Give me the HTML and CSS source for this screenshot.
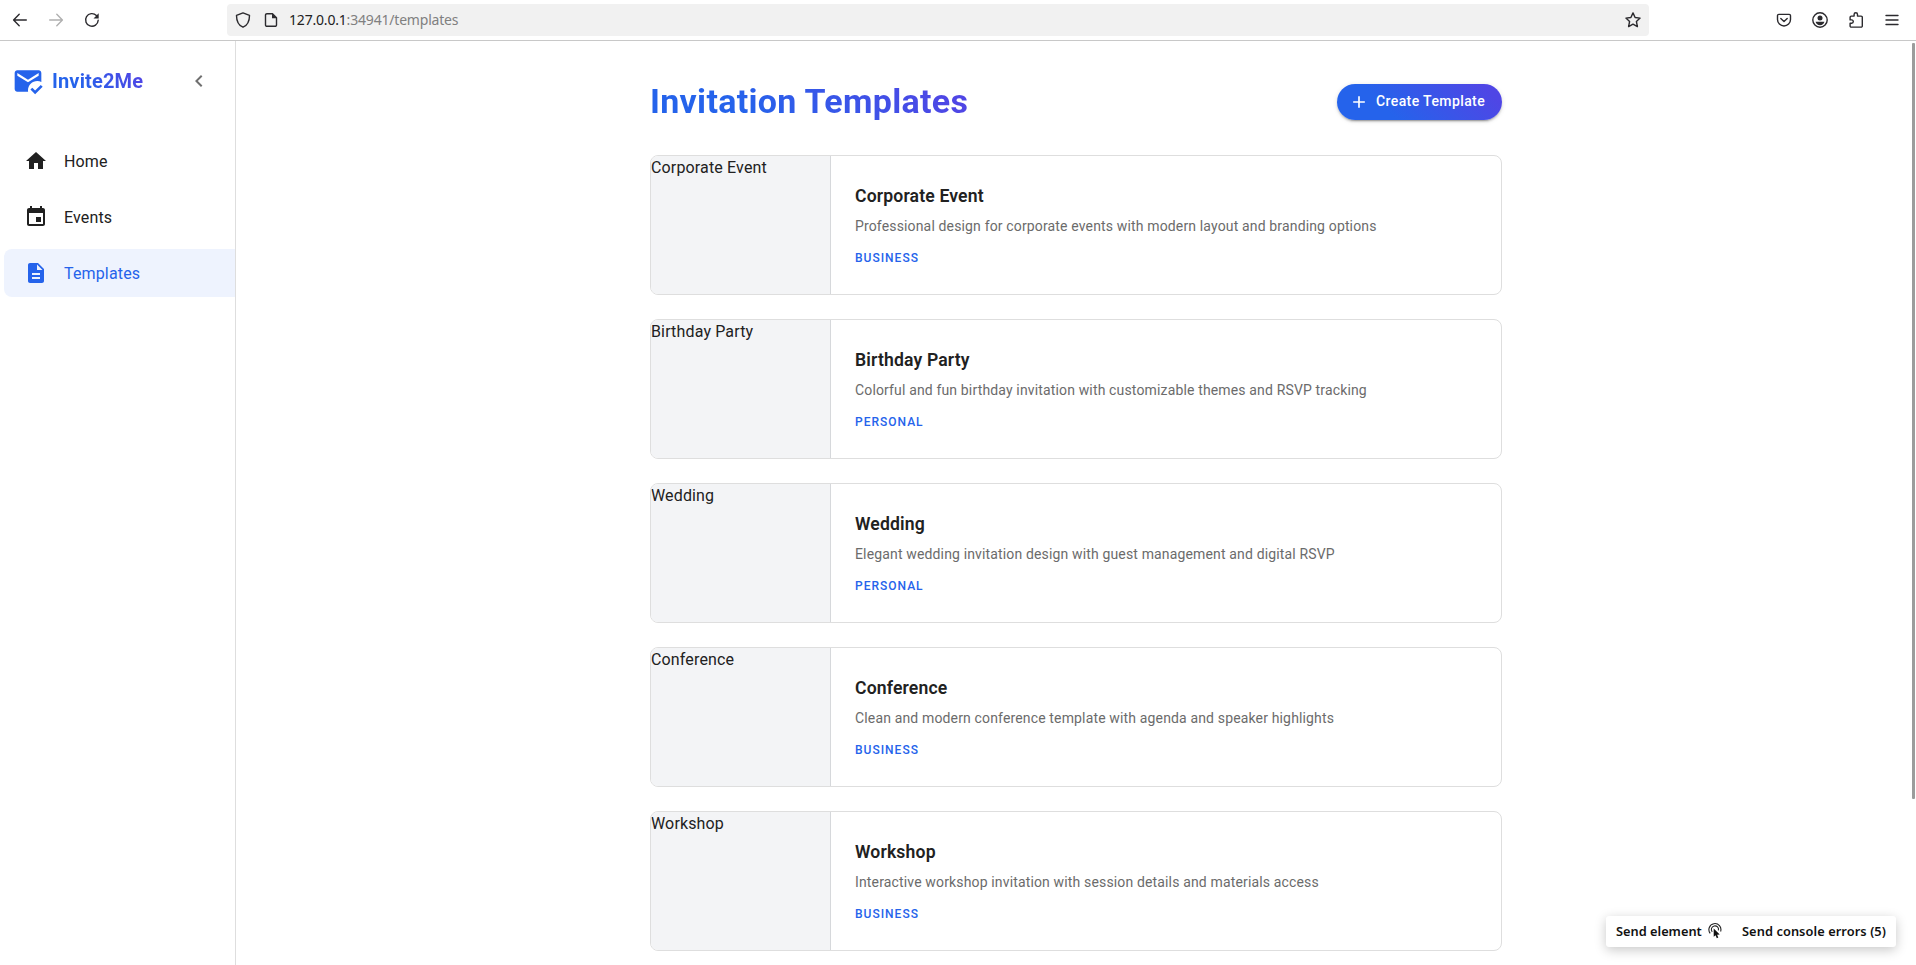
FILE: index.html
```html
<!DOCTYPE html>
<html lang="en">
<head>
<meta charset="utf-8">
<title>Invite2Me</title>
<link rel="stylesheet" href="styles.css">
</head>
<body>
<header class="browser">
  <div class="nav-buttons">
    <svg width="16" height="16" viewBox="0 0 16 16" class="line"><path d="M14.3 8H1.8M7.2 2.3 1.6 8l5.6 5.7"/></svg>
    <svg width="16" height="16" viewBox="0 0 16 16" class="line faded"><path d="M1.7 8h12.5M8.8 2.3 14.4 8l-5.6 5.7"/></svg>
    <svg width="16" height="16" viewBox="0 0 16 16" class="line"><path d="M14.2 8.3A6.3 6.3 0 1 1 12.4 3.500"/><path d="M14.700 1.300v5.200H9.500z" fill="currentColor" stroke="none"/></svg>
  </div>
  <div class="address">
    <svg width="16" height="16" viewBox="0 0 16 16" class="line"><path d="M8 .9 14.500 3.400C14.500 9 12.500 13.200 8 15.200 3.500 13.200 1.500 9 1.500 3.400z"/></svg>
    <svg width="16" height="16" viewBox="0 0 16 16" class="line page"><path d="M3.900 1.700h5.600l4 4v7.200a1.400 1.400 0 0 1-1.400 1.400H3.900a1.400 1.400 0 0 1-1.400-1.400V3.100a1.400 1.400 0 0 1 1.400-1.400z"/><path d="M9 1.200v5h5z" fill="currentColor" stroke="none"/></svg>
    <span class="url"><b>127.0.0.1</b>:34941/templates</span>
    <svg width="16" height="16" viewBox="0 0 16 16" class="line star"><path d="m8 .9 2.100 4.600 5 .6-3.700 3.400 1 5.100L8 12.100l-4.400 2.500 1-5.100L.9 6.100l5-.6z"/></svg>
  </div>
  <div class="tools">
    <svg width="16" height="16" viewBox="0 0 16 16" class="line"><path d="M2.800 2.400h10.400a1.300 1.300 0 0 1 1.300 1.300v3.800a6.500 6.500 0 0 1-13 0V3.700a1.300 1.300 0 0 1 1.300-1.300z"/><path d="M4.800 6.500 8 9.500l3.200-3"/></svg>
    <svg width="16" height="16" viewBox="0 0 16 16" class="line"><circle cx="8" cy="8" r="7.200"/><circle cx="8" cy="6" r="2.500" fill="currentColor" stroke="none"/><path d="M3.600 9.800h8.800c-.5 2.200-2.200 3.500-4.400 3.500s-3.900-1.300-4.400-3.500z" fill="currentColor" stroke="none"/></svg>
    <svg width="16" height="16" viewBox="0 0 16 16" class="line"><path d="M2.100 5.300a1.200 1.200 0 0 1 1.200-1.200h2.800V2.400a1.700 1.700 0 0 1 3.400 0v1.700h3.600a1.200 1.200 0 0 1 1.200 1.200v8.600a1.200 1.200 0 0 1-1.200 1.200H3.300a1.200 1.200 0 0 1-1.200-1.200v-2.600h1.500a1.700 1.700 0 0 0 0-3.400H2.100z"/></svg>
    <svg width="16" height="16" viewBox="0 0 16 16" class="line"><path d="M2 3.500h12M2 8h12M2 12.500h12"/></svg>
  </div>
</header>
<div class="app">
  <aside class="sidebar">
    <div class="brand">
      <svg class="brand-icon" width="32" height="32" viewBox="0 0 24 24"><path d="M20 4H4c-1.100 0-2 .9-2 2v12c0 1.100.9 2 2 2h8.080c-.05-.33-.08-.66-.08-1 0-3.870 3.130-7 7-7 1.070 0 2.090.25 3 .68V6c0-1.100-.9-2-2-2zm0 4-8 5-8-5V6l8 5 8-5v2z"/><path d="m17.340 22-3.540-3.540 1.410-1.410 2.120 2.120 4.240-4.240L23 16.340z"/></svg>
      <span class="brand-name">Invite2Me</span>
      <svg class="collapse" width="24" height="24" viewBox="0 0 24 24"><path d="M15.410 7.410 14 6l-6 6 6 6 1.410-1.410L10.830 12z"/></svg>
    </div>
    <nav class="menu">
      <a class="item"><svg width="24" height="24" viewBox="0 0 24 24"><path d="M10 20v-6h4v6h5v-8h3L12 3 2 12h3v8z"/></svg><span>Home</span></a>
      <a class="item"><svg width="24" height="24" viewBox="0 0 24 24"><path d="M17 12h-5v5h5v-5zM16 1v2H8V1H6v2H5c-1.110 0-1.990.9-1.990 2L3 19c0 1.100.89 2 2 2h14c1.100 0 2-.9 2-2V5c0-1.100-.9-2-2-2h-1V1h-2zm3 18H5V8h14v11z"/></svg><span>Events</span></a>
      <a class="item active"><svg width="24" height="24" viewBox="0 0 24 24"><path d="M14 2H6c-1.100 0-1.990.9-1.990 2L4 20c0 1.100.89 2 1.990 2H18c1.100 0 2-.9 2-2V8l-6-6zm2 16H8v-2h8v2zm0-4H8v-2h8v2zm-3-5V3.500L18.500 9H13z"/></svg><span>Templates</span></a>
    </nav>
  </aside>
  <main class="content">
    <div class="heading">
      <h1>Invitation Templates</h1>
      <button class="create"><svg width="20" height="20" viewBox="0 0 24 24"><path d="M19 13h-6v6h-2v-6H5v-2h6V5h2v6h6v2z"/></svg><span>Create Template</span></button>
    </div>
    <div class="cards">
      <article class="card"><div class="thumb">Corporate Event</div><div class="info"><h2>Corporate Event</h2><p>Professional design for corporate events with modern layout and branding options</p><span class="tag">BUSINESS</span></div></article>
      <article class="card"><div class="thumb">Birthday Party</div><div class="info"><h2>Birthday Party</h2><p>Colorful and fun birthday invitation with customizable themes and RSVP tracking</p><span class="tag">PERSONAL</span></div></article>
      <article class="card"><div class="thumb">Wedding</div><div class="info"><h2>Wedding</h2><p>Elegant wedding invitation design with guest management and digital RSVP</p><span class="tag">PERSONAL</span></div></article>
      <article class="card"><div class="thumb">Conference</div><div class="info"><h2>Conference</h2><p>Clean and modern conference template with agenda and speaker highlights</p><span class="tag">BUSINESS</span></div></article>
      <article class="card"><div class="thumb">Workshop</div><div class="info"><h2>Workshop</h2><p>Interactive workshop invitation with session details and materials access</p><span class="tag">BUSINESS</span></div></article>
    </div>
  </main>
</div>
<div class="scroll-thumb"></div>
<div class="devbar">
  <span class="send-element">Send element</span>
  <svg width="14" height="16" viewBox="0 0 14 16"><g fill="none" stroke="#222" stroke-width="1.100"><path d="M2.200 10.300A6 6 0 1 1 12.600 8.500"/><path d="M4.200 8.800a3.600 3.600 0 1 1 6.200-1.400"/></g><path d="M5.700 5.500v8.300l1.900-1.600 1.200 3 1.500-.6-1.200-2.900 2.600-.1z" fill="#111"/></svg>
  <span class="send-errors">Send console errors (5)</span>
</div>
</body>
</html>
```
FILE: styles.css
```css
* { box-sizing: border-box; }
body { margin: 0; height: 965px; overflow: hidden; background: #fff; color: #212121; font: 16px/24px Roboto, sans-serif; letter-spacing: .15px; }
svg { display: block; flex: none; fill: currentColor; }
.line { fill: none; stroke: currentColor; stroke-width: 1.4; stroke-linecap: round; stroke-linejoin: round; }
.browser { height: 41px; display: flex; align-items: center; border-bottom: 1px solid #c8c8c8; color: #2b2a2e; }
.nav-buttons { display: flex; gap: 20px; padding-left: 12px; width: 227px; }
.faded { color: #b0b0b0; }
.address { width: 1422px; height: 32px; border-radius: 4px; background: #f1f1f1; display: flex; align-items: center; padding: 0 8px; }
.page { margin-left: 12px; }
.url { margin-left: 10px; font: 14px/20px "Noto Sans", sans-serif; letter-spacing: -.19px; color: #808080; white-space: nowrap; }
.url b { font-weight: 400; color: #222; }
.star { margin-left: auto; }
.tools { margin-left: auto; margin-right: 16px; display: flex; gap: 20px; }
.app { display: flex; height: 924px; }
.sidebar { width: 236px; border-right: 1px solid #dedede; }
.brand { height: 80px; display: flex; align-items: center; padding-left: 12px; }
.brand-icon { color: #2563eb; }
.brand-name { margin-left: 8px; font-size: 20px; font-weight: 700; background: linear-gradient(45deg, #2563eb 30%, #4f46e5 90%); -webkit-background-clip: text; background-clip: text; color: transparent; }
.collapse { margin-left: auto; margin-right: 24px; color: #707070; }
.menu { display: flex; flex-direction: column; gap: 8px; padding: 16px 0 0 4px; }
.item { display: flex; align-items: center; gap: 16px; height: 48px; padding-left: 20px; border-radius: 8px 0 0 8px; }
.item span { padding-top: 2px; }
.active { color: #2563eb; background: #eef3fe; }
.content { flex: 1; display: flex; flex-direction: column; align-items: center; padding-top: 32px; }
.heading { width: 852px; height: 58px; display: flex; justify-content: space-between; align-items: center; }
h1 { margin: 0 0 2px; font-size: 34px; line-height: 42px; font-weight: 700; letter-spacing: .3px; background: linear-gradient(45deg, #2563eb 30%, #4f46e5 90%); -webkit-background-clip: text; background-clip: text; color: transparent; }
.create { border: 0; height: 36px; width: 165px; border-radius: 18px; padding: 0 0 0 12px; display: flex; align-items: center; gap: 7px; color: #fff; white-space: nowrap; font: 500 14px/24px Roboto, sans-serif; letter-spacing: .4px; background: linear-gradient(45deg, #2563eb 30%, #4f46e5 90%); box-shadow: 0 3px 1px -2px rgba(0,0,0,.2), 0 2px 2px rgba(0,0,0,.14), 0 1px 5px rgba(0,0,0,.12); }
.create span { padding-bottom: 2px; }
.cards { width: 852px; margin-top: 24px; display: flex; flex-direction: column; gap: 24px; }
.card { height: 140px; display: flex; border: 1px solid #dedede; border-radius: 8px; overflow: hidden; }
.thumb { width: 180px; border-right: 1px solid #d6d8db; background: #f3f4f6; }
.info { padding: 28px 24px 0; display: flex; flex-direction: column; align-items: flex-start; }
h2 { margin: 0 0 8px; font-size: 17.6px; line-height: 24px; font-weight: 600; }
p { margin: 0 0 10px; font-size: 14px; line-height: 20px; color: #6b6b6b; }
.tag { font-size: 12px; line-height: 24px; font-weight: 500; letter-spacing: 1px; color: #2563eb; }
.scroll-thumb { position: absolute; right: 1px; top: 43px; width: 3px; height: 756px; border-radius: 1px; background: #9c9c9c; }
.devbar { position: absolute; left: 1606px; top: 916px; width: 290px; height: 31px; border-radius: 3px; background: #fff; box-shadow: 0 3px 12px rgba(0,0,0,.22); display: flex; align-items: center; padding: 0 10px 2px; font: 600 12.8px/20px "Noto Sans", sans-serif; letter-spacing: 0; color: #111; white-space: nowrap; }
.devbar svg { margin-left: 6px; }
.send-errors { margin-left: auto; letter-spacing: .08px; }
```
